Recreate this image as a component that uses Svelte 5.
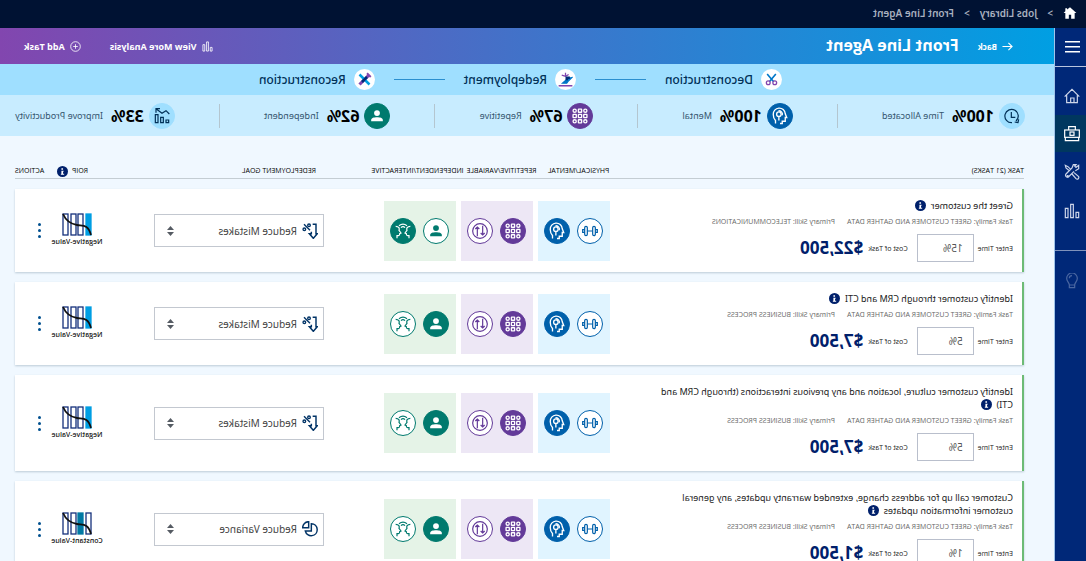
<script lang="ts">
  type Task = {
    title: string;
    skill: string;
    time: string;
    cost: string;
    interactive: boolean;
    goal: string;
    roip: string;
  };

  const stats = [
    { icon: "clock",   tone: "sky",    value: "100%", label: "Time Allocated" },
    { icon: "head",    tone: "blue",   value: "100%", label: "Mental" },
    { icon: "grid",    tone: "purple", value: "67%",  label: "Repetitive" },
    { icon: "person",  tone: "green",  value: "62%",  label: "Independent" },
    { icon: "improve", tone: "sky",    value: "33%",  label: "Improve Productivity" },
  ];

  const steps = [
    { icon: "scissors", label: "Deconstruction" },
    { icon: "redeploy", label: "Redeployment" },
    { icon: "rebuild",  label: "Reconstruction" },
  ];

  const goals = ["Reduce Mistakes", "Reduce Variance", "Improve Productivity"];

  let tasks: Task[] = $state([
    { title: "Greet the customer", skill: "TELECOMMUNICATIONS", time: "15%", cost: "$22,500", interactive: true, goal: "Reduce Mistakes", roip: "Negative-Value" },
    { title: "Identify customer through CRM and CTI", skill: "BUSINESS PROCESS", time: "5%", cost: "$7,500", interactive: false, goal: "Reduce Mistakes", roip: "Negative-Value" },
    { title: "Identify customer culture, location and any previous interactions (through CRM and CTI)", skill: "BUSINESS PROCESS", time: "5%", cost: "$7,500", interactive: false, goal: "Reduce Mistakes", roip: "Negative-Value" },
    { title: "Customer call up for address change, extended warranty updates, any general customer information updates", skill: "BUSINESS PROCESS", time: "1%", cost: "$1,500", interactive: false, goal: "Reduce Variance", roip: "Constant-Value" },
  ]);
</script>

{#snippet icon(name: string)}
  <svg class="icon {name}" viewBox="0 0 24 24" fill="none" stroke="currentColor" stroke-width="1.8" aria-hidden="true">
    {#if name === "clock"}
      <path d="M6 19.500A10 10 0 1 1 12 22M2 17l1 5 5-1M13 6v8H7" />
    {:else if name === "head"}
      <path d="M18 22v-4c2-2 3-5 3-8a8 8 0 0 0-16-1l-2 5h2v5h4v3h3" />
      <circle cx="13.500" cy="9.500" r="3" />
      <path d="M13.500 12.500V18M9 11c-1-4 2-6 5-6" />
    {:else if name === "grid"}
      {#each [4, 12, 20] as y}
        {#each [4, 12, 20] as x}
          <rect x={x - 2.4} y={y - 2.4} width="4.8" height="4.8" rx={x === 12 || y === 12 ? 0.5 : 2.4} stroke-width="2" />
        {/each}
      {/each}
    {:else if name === "person"}
      <g fill="currentColor" stroke="none">
        <circle cx="12" cy="7" r="5" />
        <path d="M2 21v-2c0-4 5-5 10-5s10 1 10 5v2z" />
      </g>
    {:else if name === "interact"}
      <path d="M1 5c5 0 6 3 5 6l3 4-2 1c0 3-1 3-4 3v4M23 5c-5 0-6 3-5 6l-3 4 2 1c0 3 1 3 4 3v4M6 4c4-3 8-3 12 0M9 7c2-2 4-2 6 0" />
    {:else if name === "cycle"}
      <circle cx="12" cy="12" r="11" />
      <path d="M8 4v14M5 15l3 3 3-3M16 20V6M13 9l3-3 3 3" />
    {:else if name === "dumbbell"}
      <rect x="4" y="5" width="4" height="14" rx="2" />
      <rect x="16" y="5" width="4" height="14" rx="2" />
      <path d="M8 12h8M4 10H1v4h3M20 10h3v4h-3" />
    {:else if name === "improve"}
      <path d="M2 18h4v4H2zM10 14h4v8h-4zM18 10h4v12h-4zM1 9l5-5 6 4 8-6M15 1h6v6" />
    {:else if name === "scissors"}
      <path d="M4 2l12 14M20 2L8 16" stroke="#0077c8" stroke-width="3" />
      <circle cx="6" cy="18" r="3.5" stroke="#8246af" stroke-width="2.4" />
      <circle cx="18" cy="18" r="3.5" stroke="#8246af" stroke-width="2.4" />
    {:else if name === "redeploy"}
      <path d="M7 4l5 3 6-2M12 7V1" stroke="#8246af" stroke-width="2" />
      <path d="M2 9l6 1 9 8h-7l-3-4z" fill="#0077c8" stroke="#0077c8" />
      <path d="M5 9h5v4" stroke="#002c77" stroke-width="4" />
      <path d="M1 22h22" stroke="#8246af" stroke-width="2.5" />
    {:else if name === "rebuild"}
      <path d="M5 5l15 15" stroke="#8246af" stroke-width="5" />
      <path d="M20 4L4 20" stroke="#009de0" stroke-width="4" />
      <path d="M2 8l6-6" stroke="#8246af" stroke-width="3" />
      <path d="M8 8l8 8" stroke="#002c77" stroke-width="4" />
    {:else if name === "house"}
      <path d="M1 13L12 2l11 11M4 11v11h16V11M9 22v-7h5v7" />
    {:else if name === "case"}
      <rect x="1" y="6" width="22" height="11" />
      <path d="M7 6V1h10v5M2 17v5h20v-5" />
      <rect x="9" y="9" width="6" height="5" />
    {:else if name === "tools"}
      <path d="M7 10L2 7V2l4 3 2-2-2-2h4l2 5 9 9c2 3-1 6-4 4l-8-8M14 8l4-4 4-2-1 4-5 4M9 13l-7 6c-1 3 2 5 4 3l6-7" />
      <circle cx="18.500" cy="18.500" r="1" />
    {:else if name === "bars"}
      <path d="M2 14h4v8H2zM10 2h4v20h-4zM18 8h4v14h-4z" />
    {:else if name === "bulb"}
      <path d="M8 18c0-4-4-5-4-10a8 8 0 0 1 16 0c0 5-4 6-4 10zM8 18v4h8v-4M12 4c3 0 4 2 4 4" />
    {:else if name === "plus"}
      <circle cx="12" cy="12" r="10.500" />
      <path d="M12 7v10M7 12h10" />
    {:else if name === "back"}
      <path d="M23 12H2M10 4l-8 8 8 8" stroke-width="2.4" />
    {:else if name === "mistakes"}
      <path d="M8 2H3v14H1l6 7 6-7h-3v-3" stroke-width="2.2" />
      <path d="M21 2l-9 9" stroke-width="2.2" />
      <circle cx="13.500" cy="3.500" r="2" stroke-width="2" />
      <circle cx="20.500" cy="9.500" r="2" stroke-width="2" />
    {:else if name === "variance"}
      <path d="M10 4a9 9 0 1 0 9 11h-9z" stroke-width="2.2" />
      <path d="M14 1v9h9c0-5-4-9-9-9z" stroke-width="2.2" />
    {/if}
  </svg>
{/snippet}

{#snippet info()}
  <svg class="info" viewBox="0 0 20 20" role="img" aria-label="Information">
    <circle cx="10" cy="10" r="10" fill="#00206b" />
    <path d="M9 4h3v3H9zM8 8.500h4V14h1v2H7v-2h2v-3.500H8z" fill="#fff" />
  </svg>
{/snippet}

<!-- the whole screen is laid out left to right and mirrored once at the root -->
<div class="app">
  <nav class="crumbs" aria-label="Breadcrumb">
    <a href="#home" aria-label="Home">
      <svg class="home" viewBox="0 0 24 24" fill="currentColor"><path d="M12 2L1 12h3v10h6v-7h4v7h6V12h3l-3-3V4h-3v2z" /></svg>
    </a>
    <span>&gt;</span>
    <a href="#jobs">Jobs Library</a>
    <span>&gt;</span>
    <a href="#agent">Front Line Agent</a>
  </nav>

  <div class="body">
    <nav class="side" aria-label="Main">
      <button class="burger" aria-label="Menu"><i></i><i></i><i></i></button>
      <div class="side-links">
        <a href="#house" aria-label="Home">{@render icon("house")}</a>
        <a href="#case" class="active" aria-label="Jobs">{@render icon("case")}</a>
        <a href="#tools" aria-label="Tools">{@render icon("tools")}</a>
        <a href="#bars" aria-label="Analysis">{@render icon("bars")}</a>
      </div>
      <a href="#ideas" class="ideas" aria-label="Ideas">{@render icon("bulb")}</a>
    </nav>

    <main>
      <header>
        <a class="back" href="#back">{@render icon("back")}Back</a>
        <h1>Front Line Agent</h1>
        <button>{@render icon("bars")}View More Analysis</button>
        <button>{@render icon("plus")}Add Task</button>
      </header>

      <div class="steps">
        {#each steps as step, i}
          {#if i > 0}<hr />{/if}
          <a href="#{step.icon}"><span class="step-icon">{@render icon(step.icon)}</span>{step.label}</a>
        {/each}
      </div>

      <div class="stats">
        {#each stats as stat, i}
          {#if i > 0}<span class="sep"></span>{/if}
          <div class="stat">
            <span class="dot {stat.tone}">{@render icon(stat.icon)}</span>
            <strong>{stat.value}</strong>
            <span>{stat.label}</span>
          </div>
        {/each}
      </div>

      <div class="content">
        <table>
          <colgroup>
            <col />
            <col class="c-pair" /><col class="c-pair" /><col class="c-pair" />
            <col class="c-goal" /><col class="c-roip" /><col class="c-act" />
          </colgroup>
          <thead>
            <tr>
              <th>TASK (21 TASKS)</th>
              <th><div class="mid">PHYSICAL/MENTAL</div></th>
              <th><div class="mid">REPETITIVE/VARIABLE</div></th>
              <th><div class="mid wide">INDEPENDENT/INTERACTIVE</div></th>
              <th class="goal-head">REDEPLOYMENT GOAL</th>
              <th><div class="roip-head">ROIP {@render info()}</div></th>
              <th class="act">ACTIONS</th>
            </tr>
          </thead>
          <tbody>
            {#each tasks as task, i}
              <tr>
                <td class="task">
                  <h2>{task.title}&nbsp; {@render info()}</h2>
                  <p class="meta"><span>Task Family: GREET CUSTOMER AND GATHER DATA</span><span>Primary Skill: {task.skill}</span></p>
                  <div class="figures">
                    <label for="time-{i}">Enter Time</label>
                    <input id="time-{i}" type="text" bind:value={task.time} />
                    <span>Cost of Task</span>
                    <strong>{task.cost}</strong>
                  </div>
                </td>
                <td><div class="pair bg-blue">
                  <span class="dot blue open">{@render icon("dumbbell")}</span>
                  <span class="dot blue">{@render icon("head")}</span>
                </div></td>
                <td><div class="pair bg-purple">
                  <span class="dot purple">{@render icon("grid")}</span>
                  <span class="dot purple open">{@render icon("cycle")}</span>
                </div></td>
                <td><div class="pair bg-green">
                  <span class="dot green" class:open={task.interactive}>{@render icon("person")}</span>
                  <span class="dot green" class:open={!task.interactive}>{@render icon("interact")}</span>
                </div></td>
                <td class="goal-cell">
                  <div class="goal">
                    {@render icon(task.goal === "Reduce Variance" ? "variance" : "mistakes")}
                    <select bind:value={task.goal} aria-label="Redeployment goal">
                      {#each goals as goal}<option>{goal}</option>{/each}
                    </select>
                    <svg class="arrows" viewBox="0 0 7 10" fill="#555b63"><path d="M0 4l3.500-4L7 4zM0 6h7l-3.500 4z" /></svg>
                  </div>
                </td>
                <td>
                  <div class="roip">
                    <svg viewBox="0 0 30 23" fill="none" stroke="#15307c" stroke-width="1.3">
                      <rect x="1" y="1" width="5" height="21" class:sky={task.roip === "Negative-Value"} />
                      <rect x="9" y="1" width="5" height="21" class:teal={task.roip === "Constant-Value"} />
                      <rect x="16" y="1" width="5" height="21" />
                      <rect x="24" y="1" width="5" height="21" />
                      <path d="M1 22c3-11 8-9 14-10S26 8 29 1" stroke="#111" stroke-width="1.8" />
                    </svg>
                    {task.roip}
                  </div>
                </td>
                <td><button class="more" aria-label="More actions"><i></i><i></i><i></i></button></td>
              </tr>
            {/each}
          </tbody>
        </table>
      </div>
    </main>
  </div>
</div>

<style>
  :global(body) { margin: 0; }

  .app {
    display: flex;
    flex-direction: column;
    height: 100vh;
    overflow: hidden;
    transform: scaleX(-1);
    background: #f0f8ff;
    color: #222;
    font-family: "Noto Sans", "Open Sans", sans-serif;
    font-size: 10px;
  }

  a { color: inherit; text-decoration: none; }
  button {
    padding: 0;
    border: 0;
    background: none;
    color: inherit;
    font: inherit;
    cursor: pointer;
  }
  .icon { display: block; width: 16px; height: 16px; flex: none; }
  .info { width: 11px; height: 11px; flex: none; vertical-align: -2px; }

  .crumbs {
    display: flex;
    align-items: center;
    gap: 10px;
    height: 28px;
    padding: 0 9px 2px;
    box-sizing: border-box;
    background: #001233;
    color: #a9b0bf;
    font-size: 10px;
    font-weight: 600;
    flex: none;
  }
  .home { display: block; width: 14px; height: 14px; color: #fff; }

  .body { display: flex; flex: 1; min-height: 0; }

  .side {
    width: 32px;
    box-sizing: border-box;
    border-right: 1px solid #9fc4ea;
    flex: none;
    background: #002878;
    color: #cdd6ea;
  }
  .burger {
    display: flex;
    flex-direction: column;
    align-items: center;
    justify-content: center;
    gap: 3px;
    width: 100%;
    height: 39px;
    padding-right: 4px;
    border-bottom: 1px solid #b9c4de;
  }
  .burger i { width: 15px; height: 1px; background: #fff; border-bottom: 1px solid #8093bb; }
  .side-links { padding: 9px 0 20px; border-bottom: 1px solid #8093bb; }
  .side-links a, .ideas { display: flex; align-items: center; height: 39px; padding-left: 6px; }
  .side-links .active { height: 37px; background: #00375f; color: #fff; }
  .ideas { height: 60px; color: #4a67a1; }

  main { display: flex; flex-direction: column; flex: 1; min-width: 0; }

  header {
    display: flex;
    align-items: center;
    height: 36px;
    padding: 0 24px 0 41px;
    box-sizing: border-box;
    background: linear-gradient(90deg, #009fe3, #8246af);
    color: #fff;
    font: 700 9px "Open Sans", "Noto Sans", sans-serif;
    flex: none;
  }
  header h1 { flex: 1; margin: 0 0 2px 19px; font-size: 16px; line-height: 20px; }
  header button, .back { display: flex; align-items: center; gap: 5px; }
  .back { font-size: 8px; }
  header .icon { width: 11px; height: 11px; }
  header button + button { margin-left: 29px; }

  .steps {
    display: flex;
    align-items: center;
    height: 31px;
    padding-left: 272px;
    background: #9fdfff;
    color: #003057;
    font-size: 12px;
    font-weight: 500;
    flex: none;
  }
  .steps a { display: flex; align-items: center; gap: 8px; line-height: 16px; }
  .steps hr { width: 51px; margin: 0 19px; border: 0; border-top: 1px solid #2a8fd0; }
  .step-icon { padding: 3px; border-radius: 50%; background: #fff; }
  .step-icon .icon { width: 15px; height: 15px; }
  .step-icon .scissors { padding: 1px; box-sizing: border-box; }

  .stats {
    display: flex;
    align-items: center;
    justify-content: space-between;
    height: 41px;
    padding: 0 15px 0 29px;
    background: #c8ecff;
    color: #35566f;
    font-size: 9px;
    flex: none;
  }
  .stat { display: flex; align-items: center; }
  .stat strong { margin: 0 8px 0 5px; color: #000; font-size: 16px; line-height: 20px; }
  .sep { width: 1px; height: 24px; background: #b4c6d0; }

  .dot {
    display: flex;
    align-items: center;
    justify-content: center;
    width: 26px;
    height: 26px;
    box-sizing: border-box;
    border: 1px solid currentColor;
    border-radius: 50%;
  }
  .dot .icon { width: 16px; height: 16px; }
  .dot .person { width: 14px; height: 14px; }
  .dot .head { width: 18px; height: 18px; }
  .dot.sky { background: #9fdfff; border-color: #9fdfff; color: #003057; }
  .dot.blue { background: #0060ab; border-color: #0060ab; color: #fff; }
  .dot.purple { background: #633a99; border-color: #633a99; color: #fff; }
  .dot.green { background: #007a6e; border-color: #007a6e; color: #fff; }
  .dot.open { background: #fff; }
  .dot.blue.open { color: #0060ab; }
  .dot.purple.open { color: #633a99; }
  .dot.green.open { color: #007a6e; }

  .content {
    flex: 1;
    min-height: 0;
    padding: 18px 15px 10px 30px;
    overflow-y: auto;
    scrollbar-width: none;
  }

  table {
    width: 100%;
    table-layout: fixed;
    border-collapse: separate;
    border-spacing: 0 10px;
  }
  .c-pair { width: 77px; }
  .c-goal { width: 203px; }
  .c-roip { width: 123px; }
  .c-act { width: 38px; }

  th {
    height: 14px;
    padding: 0;
    border-bottom: 1px solid #c4cdd3;
    color: #000;
    font: 400 7px/12px "Open Sans", "Noto Sans", sans-serif;
    text-align: left;
    white-space: nowrap;
  }
  .mid { display: flex; justify-content: center; padding-right: 14px; }
  .mid.wide { padding: 0; }
  .goal-head { padding-left: 63px; }
  .roip-head { display: flex; align-items: center; gap: 4px; padding-left: 88px; }
  .act { text-align: right; }

  tbody tr { background: #fff; box-shadow: 0 1px 2px #bccbd6; }
  td { padding: 0; vertical-align: middle; }

  .task { padding: 10px 40px 10px 9px; border-left: 2px solid #6dbb76; }
  h2 { margin: 0; font-size: 9px; font-weight: 400; line-height: 13px; }
  .meta {
    display: flex;
    gap: 12px;
    margin: 4px 0 7px;
    color: #666;
    font: 7px/11px "Open Sans", "Noto Sans", sans-serif;
    white-space: nowrap;
  }
  .figures { display: flex; align-items: center; font: 500 7px "Open Sans", "Noto Sans", sans-serif; }
  .figures input {
    width: 57px;
    height: 28px;
    margin: 0 9px 0 4px;
    padding: 0 0 0 10px;
    box-sizing: border-box;
    border: 1px solid #b9bfcc;
    background: #fff;
    color: #555;
    font: 10px "Noto Sans", sans-serif;
  }
  .figures strong { margin-left: 5px; color: #00206b; font: 700 17px/20px "Noto Sans", sans-serif; }

  .pair {
    display: flex;
    align-items: center;
    justify-content: center;
    gap: 7px;
    width: 72px;
    height: 60px;
  }
  .bg-blue { background: #e0f4ff; }
  .bg-purple { background: #ede7f5; }
  .bg-green { background: #e5f3e7; }

  .goal-cell { padding-left: 55px; }
  .goal {
    display: flex;
    align-items: center;
    width: 170px;
    height: 33px;
    padding: 0 12px 0 5px;
    box-sizing: border-box;
    border: 1px solid #c3c8d0;
    color: #003366;
  }
  .goal select {
    flex: 1;
    margin: 0 5px;
    padding: 0;
    border: 0;
    appearance: none;
    background: none;
    color: #444;
    font: 10px "Noto Sans", sans-serif;
  }
  .arrows { width: 7px; height: 10px; }

  .roip {
    display: flex;
    flex-direction: column;
    align-items: center;
    width: 48px;
    margin-left: auto;
    color: #222;
    font: 600 7px/12px "Open Sans", "Noto Sans", sans-serif;
    white-space: nowrap;
  }
  .roip svg { width: 30px; height: 23px; }
  .roip .sky { fill: #009fe3; stroke: #009fe3; }
  .roip .teal { fill: #0079a3; stroke: #0079a3; }

  .more {
    display: flex;
    flex-direction: column;
    align-items: center;
    gap: 3px;
    width: 20px;
    margin-left: 3px;
  }
  .more i { width: 3px; height: 3px; border-radius: 50%; background: #00508f; }
</style>
